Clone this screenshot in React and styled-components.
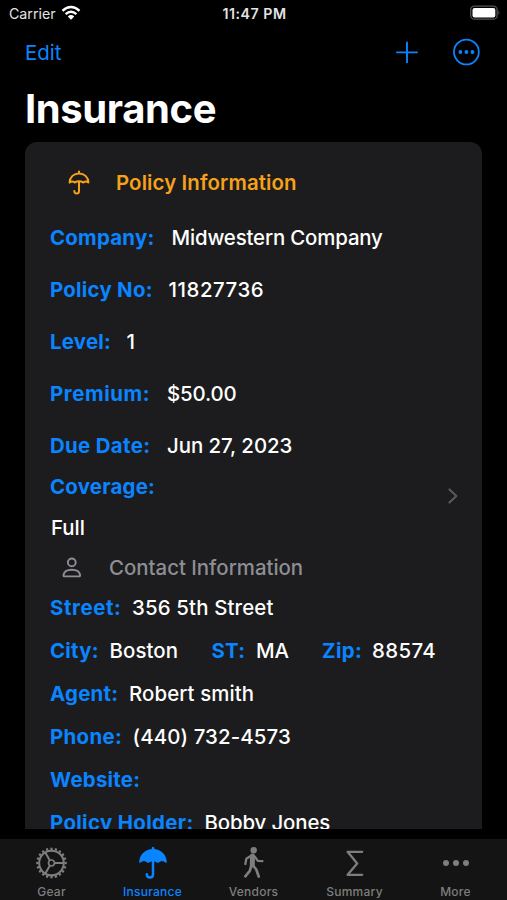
import React from 'react';
import styled, { createGlobalStyle } from 'styled-components';

const GlobalStyle = createGlobalStyle`
  * {
    box-sizing: border-box;
  }

  body {
    margin: 0;
    background-color: #000;
    font-family: Inter, "Liberation Sans", sans-serif;
  }
`;

const Screen = styled.div`
  display: flex;
  flex-direction: column;
  width: 507px;
  height: 900px;
  overflow: hidden;
  background-color: #000;
  color: #fff;
`;

const StatusBar = styled.div`
  display: grid;
  grid-template-columns: 1fr auto 1fr;
  align-items: center;
  height: 27px;
  padding: 0 6px 0 9px;
  font-size: 14.2px;
  color: #e4e4e4;
`;

const Carrier = styled.div`
  display: flex;
  align-items: center;
  gap: 5px;

  svg {
    margin-top: -1px;
  }
`;

const Clock = styled.span`
  margin-left: -1px;
  font-weight: 600;
  letter-spacing: 0.5px;
`;

const BatteryIcon = styled.svg`
  justify-self: end;
  margin-top: -1px;
`;

const NavBar = styled.div`
  display: flex;
  align-items: center;
  height: 50px;
  padding: 0 26px 0 25px;
  color: #0a84ff;
`;

const EditButton = styled.button`
  margin-right: auto;
  padding: 0;
  border: none;
  background: none;
  color: inherit;
  font-family: inherit;
  font-size: 20.4px;
`;

const IconButton = styled.button`
  display: flex;
  margin-left: ${({ gap }) => gap || 0}px;
  padding: 0;
  border: none;
  background: none;
  color: inherit;
`;

const Title = styled.h1`
  height: 65px;
  margin: 0;
  padding-left: 25px;
  font-size: 40px;
  font-weight: 700;
  line-height: 64px;
  letter-spacing: -0.4px;
`;

const Card = styled.main`
  height: 687px;
  margin: 0 25px;
  padding: 15px 25px 0;
  overflow: hidden;
  border-radius: 12px 12px 0 0;
  background-color: #1c1c1e;
  font-size: 20.4px;
  white-space: nowrap;
`;

const SectionHeader = styled.div`
  display: flex;
  align-items: center;
  height: ${({ height }) => height}px;
  margin-bottom: ${({ bottom }) => bottom || 0}px;
  padding-left: ${({ indent }) => indent}px;
  color: ${({ color }) => color};
  font-weight: ${({ weight }) => weight};
  letter-spacing: ${({ spacing }) => spacing || 0}px;
`;

const HeaderIcon = styled.svg`
  flex: none;
  margin-right: ${({ gap }) => gap}px;
`;

const Row = styled.div`
  display: flex;
  align-items: center;
  height: ${({ height }) => height}px;
  padding-left: ${({ indent }) => indent || 0}px;
`;

const Label = styled.span`
  flex: none;
  width: ${({ width }) => width}px;
  color: #0a84ff;
  font-weight: 700;
  letter-spacing: ${({ spacing }) => spacing || 0.25}px;
`;

const Value = styled.span`
  flex: none;
  width: ${({ width }) => (width ? `${width}px` : 'auto')};
  font-weight: 500;
  letter-spacing: ${({ spacing }) => spacing || 0}px;
`;

const CoverageRow = styled.div`
  display: flex;
  align-items: center;
  justify-content: space-between;
  height: 81px;
  margin-top: -4px;
`;

const CoverageText = styled.div`
  display: flex;
  flex-direction: column;
`;

const Chevron = styled.svg`
  margin: -23px -1px 0 0;
`;

const TabBar = styled.nav`
  display: grid;
  grid-template-columns: repeat(5, 101px);
  height: 61px;
  margin-top: 10px;
  padding-left: 1px;
  background-color: #141414;
`;

const Tab = styled.div`
  display: flex;
  flex-direction: column;
  align-items: center;
  padding-top: 6px;
  color: ${({ active }) => (active ? '#0a84ff' : '#7e7e7e')};
  font-size: 12px;
  font-weight: 500;
  line-height: 16px;
  letter-spacing: 0.25px;

  svg {
    flex: none;
    margin-bottom: 3px;
  }
`;

const policyRows = [
  { label: 'Company:', value: 'Midwestern Company', width: 121.5, spacing: -0.15 },
  { label: 'Policy No:', value: '11827736', width: 118.5, spacing: 0.55 },
  { label: 'Level:', value: '1', width: 76.5 },
  { label: 'Premium:', value: '$50.00', width: 117, labelSpacing: 0.6, spacing: -0.15 },
  { label: 'Due Date:', value: 'Jun 27, 2023', width: 117, labelSpacing: 0.35, spacing: -0.05 },
];

const contactRows = [
  [{ label: 'Street:', value: '356 5th Street', width: 82, labelSpacing: 0.6, spacing: 0.15 }],
  [
    { label: 'City:', value: 'Boston', width: 59.5, valueWidth: 102, spacing: 0.1 },
    { label: 'ST:', value: 'MA', width: 44.5, valueWidth: 66 },
    { label: 'Zip:', value: '88574', width: 50, labelSpacing: 0.4, spacing: 0.4 },
  ],
  [{ label: 'Agent:', value: 'Robert smith', width: 79, spacing: 0.1 }],
  [{ label: 'Phone:', value: '(440) 732-4573', width: 82.5, labelSpacing: 0.35, spacing: 0.13 }],
  [{ label: 'Website:', value: '', width: 90 }],
  [{ label: 'Policy Holder:', value: 'Bobby Jones', width: 154.5, labelSpacing: 0.35, spacing: -0.12 }],
];

function Field({ field }) {
  return (
    <>
      <Label width={field.width} spacing={field.labelSpacing}>{field.label}</Label>
      <Value width={field.valueWidth} spacing={field.spacing}>{field.value}</Value>
    </>
  );
}

function GearIcon() {
  const teeth = Array.from({ length: 20 }, (_, i) => i * 18);
  return (
    <svg width="34" height="36" viewBox="-16.5 -18 34 36" fill="none" stroke="currentColor">
      <circle r="12.3" strokeWidth="2" />
      {teeth.map((angle) => (
        <path key={angle} d="M0 -13V-15.3" strokeWidth="2.3" transform={`rotate(${angle})`} />
      ))}
      <circle r="3" strokeWidth="1.7" />
      <path d="M3 0H12M-1.6 -2.6L-6.2 -10.6M-1.6 2.6L-6.2 10.6" strokeWidth="2" />
    </svg>
  );
}

function UmbrellaIcon() {
  return (
    <svg width="32" height="36" viewBox="0 0 32 36" fill="none" stroke="currentColor">
      <path
        d="M2.2 17C2.5 9.5 8 4.6 14.7 4V2.7Q16 1 17.3 2.7V4C24 4.6 29.5 9.5 29.8 17Q29.4 18.4 28.4 17.6Q25 14.6 21.8 17.6Q20.8 18.5 19.8 17.6Q16 14.7 12.2 17.6Q11.2 18.5 10.2 17.6Q7 14.6 3.6 17.6Q2.6 18.4 2.2 17Z"
        fill="currentColor"
        stroke="none"
      />
      <path d="M16 15V29.5Q16 32.5 13 32.5T9.8 29.3" strokeWidth="2.5" strokeLinecap="round" />
    </svg>
  );
}

function WalkIcon() {
  return (
    <svg width="32" height="36" viewBox="0 0 32 36" fill="none" stroke="currentColor" strokeLinecap="round" strokeLinejoin="round">
      <circle cx="15.7" cy="5.3" r="3.2" fill="currentColor" stroke="none" />
      <path d="M14.5 11L14.3 20" strokeWidth="5" />
      <path d="M13.5 10.5L8.3 13.7L7.4 19M17 11.8L19.8 15.8L24.4 16.2" strokeWidth="2.3" />
      <path d="M15 20.5L18.3 24.5L20.7 31.5M13.2 21L11.8 25.8L7.3 31.3" strokeWidth="2.7" />
    </svg>
  );
}

function SigmaIcon() {
  return (
    <svg width="32" height="36" viewBox="0 0 32 36" fill="none" stroke="currentColor" strokeWidth="2.3" strokeLinecap="round" strokeLinejoin="round">
      <path d="M23.2 6.8H8.6L18.2 18.4L8.6 29.8H23.2" />
    </svg>
  );
}

function MoreIcon() {
  return (
    <svg width="32" height="36" viewBox="0 0 32 36" fill="currentColor">
      <circle cx="6" cy="18" r="3" />
      <circle cx="16" cy="18" r="3" />
      <circle cx="26" cy="18" r="3" />
    </svg>
  );
}

const tabs = [
  { name: 'Gear', icon: <GearIcon /> },
  { name: 'Insurance', icon: <UmbrellaIcon />, active: true },
  { name: 'Vendors', icon: <WalkIcon /> },
  { name: 'Summary', icon: <SigmaIcon /> },
  { name: 'More', icon: <MoreIcon /> },
];

function App() {
  return (
    <>
      <GlobalStyle />
      <Screen>
        <StatusBar>
          <Carrier>
            <span>Carrier</span>
            <svg width="20" height="16" viewBox="0 0 20 16" fill="none" stroke="#fff" strokeWidth="2.4">
              <path d="M1.5 5.8Q10 -1.8 18.5 5.8" />
              <path d="M4.6 9.2Q10 4.2 15.4 9.2" />
              <path d="M6.8 11.4Q10 8.8 13.2 11.4L10 14.8Z" fill="#fff" stroke="none" />
            </svg>
          </Carrier>
          <Clock>11:47 PM</Clock>
          <BatteryIcon width="31" height="16" viewBox="0 0 31 16">
            <rect x="0.7" y="1.2" width="26.4" height="13" rx="3.8" fill="none" stroke="#555" strokeWidth="1.3" />
            <rect x="2.5" y="3" width="22.8" height="9.4" rx="2" fill="#fff" />
            <path d="M28.4 5.3Q30.4 7.7 28.4 10.1Z" fill="#555" />
          </BatteryIcon>
        </StatusBar>

        <NavBar>
          <EditButton>Edit</EditButton>
          <IconButton>
            <svg width="22" height="22" viewBox="0 0 22 22" fill="none" stroke="currentColor" strokeWidth="1.9" strokeLinecap="round">
              <path d="M11 1.4V21.4M1 11.4H21" />
            </svg>
          </IconButton>
          <IconButton gap={35}>
            <svg width="28" height="28" viewBox="0 0 28 28" fill="none" stroke="currentColor" strokeWidth="1.8">
              <circle cx="13.4" cy="14" r="12.4" />
              <g fill="currentColor" stroke="none">
                <circle cx="7.4" cy="14" r="1.9" />
                <circle cx="13.4" cy="14" r="1.9" />
                <circle cx="19.4" cy="14" r="1.9" />
              </g>
            </svg>
          </IconButton>
        </NavBar>

        <Title>Insurance</Title>

        <Card>
          <SectionHeader height={51} bottom={3} indent={17} color="#f5a11a" weight={600} spacing={0.12}>
            <HeaderIcon gap={25} width="24" height="26" viewBox="0 0 24 26" fill="none" stroke="currentColor" strokeWidth="2" strokeLinecap="round" strokeLinejoin="round">
              <path d="M12 1.6V3.2M2.6 12.6C2.8 7 6.8 3.4 12 3.4S21.2 7 21.4 12.6Q19 10.6 16.4 12.5Q14.2 11.3 12 11.3T7.6 12.5Q5 10.6 2.6 12.6ZM12 11.5V21Q12 23.5 9.7 23.5T7.3 21" />
            </HeaderIcon>
            Policy Information
          </SectionHeader>

          {policyRows.map((row) => (
            <Row key={row.label} height={52}>
              <Field field={row} />
            </Row>
          ))}

          <CoverageRow>
            <CoverageText>
              <Row height={39}>
                <Label width={110}>Coverage:</Label>
              </Row>
              <Row height={42} indent={1}>
                <Value>Full</Value>
              </Row>
            </CoverageText>
            <Chevron width="10" height="16" viewBox="0 0 10 16" fill="none" stroke="#5b5b5f" strokeWidth="2" strokeLinecap="round" strokeLinejoin="round">
              <path d="M1.4 1.4L8.4 8L1.4 14.6" />
            </Chevron>
          </CoverageRow>

          <SectionHeader height={38} indent={11} color="#8e8e93" weight={500}>
            <HeaderIcon gap={27} width="21" height="22" viewBox="0 0 21 22" fill="none" stroke="currentColor" strokeWidth="1.9">
              <circle cx="10.8" cy="6.4" r="3.9" />
              <path d="M3.6 20.4H18Q19.3 20.4 19.1 19C18.6 15.7 15.3 13.8 10.8 13.8S3 15.7 2.5 19Q2.3 20.4 3.6 20.4Z" />
            </HeaderIcon>
            Contact Information
          </SectionHeader>

          {contactRows.map((fields) => (
            <Row key={fields[0].label} height={43}>
              {fields.map((field) => (
                <Field key={field.label} field={field} />
              ))}
            </Row>
          ))}
        </Card>

        <TabBar>
          {tabs.map((tab) => (
            <Tab key={tab.name} active={tab.active}>
              {tab.icon}
              {tab.name}
            </Tab>
          ))}
        </TabBar>
      </Screen>
    </>
  );
}

export default App;
